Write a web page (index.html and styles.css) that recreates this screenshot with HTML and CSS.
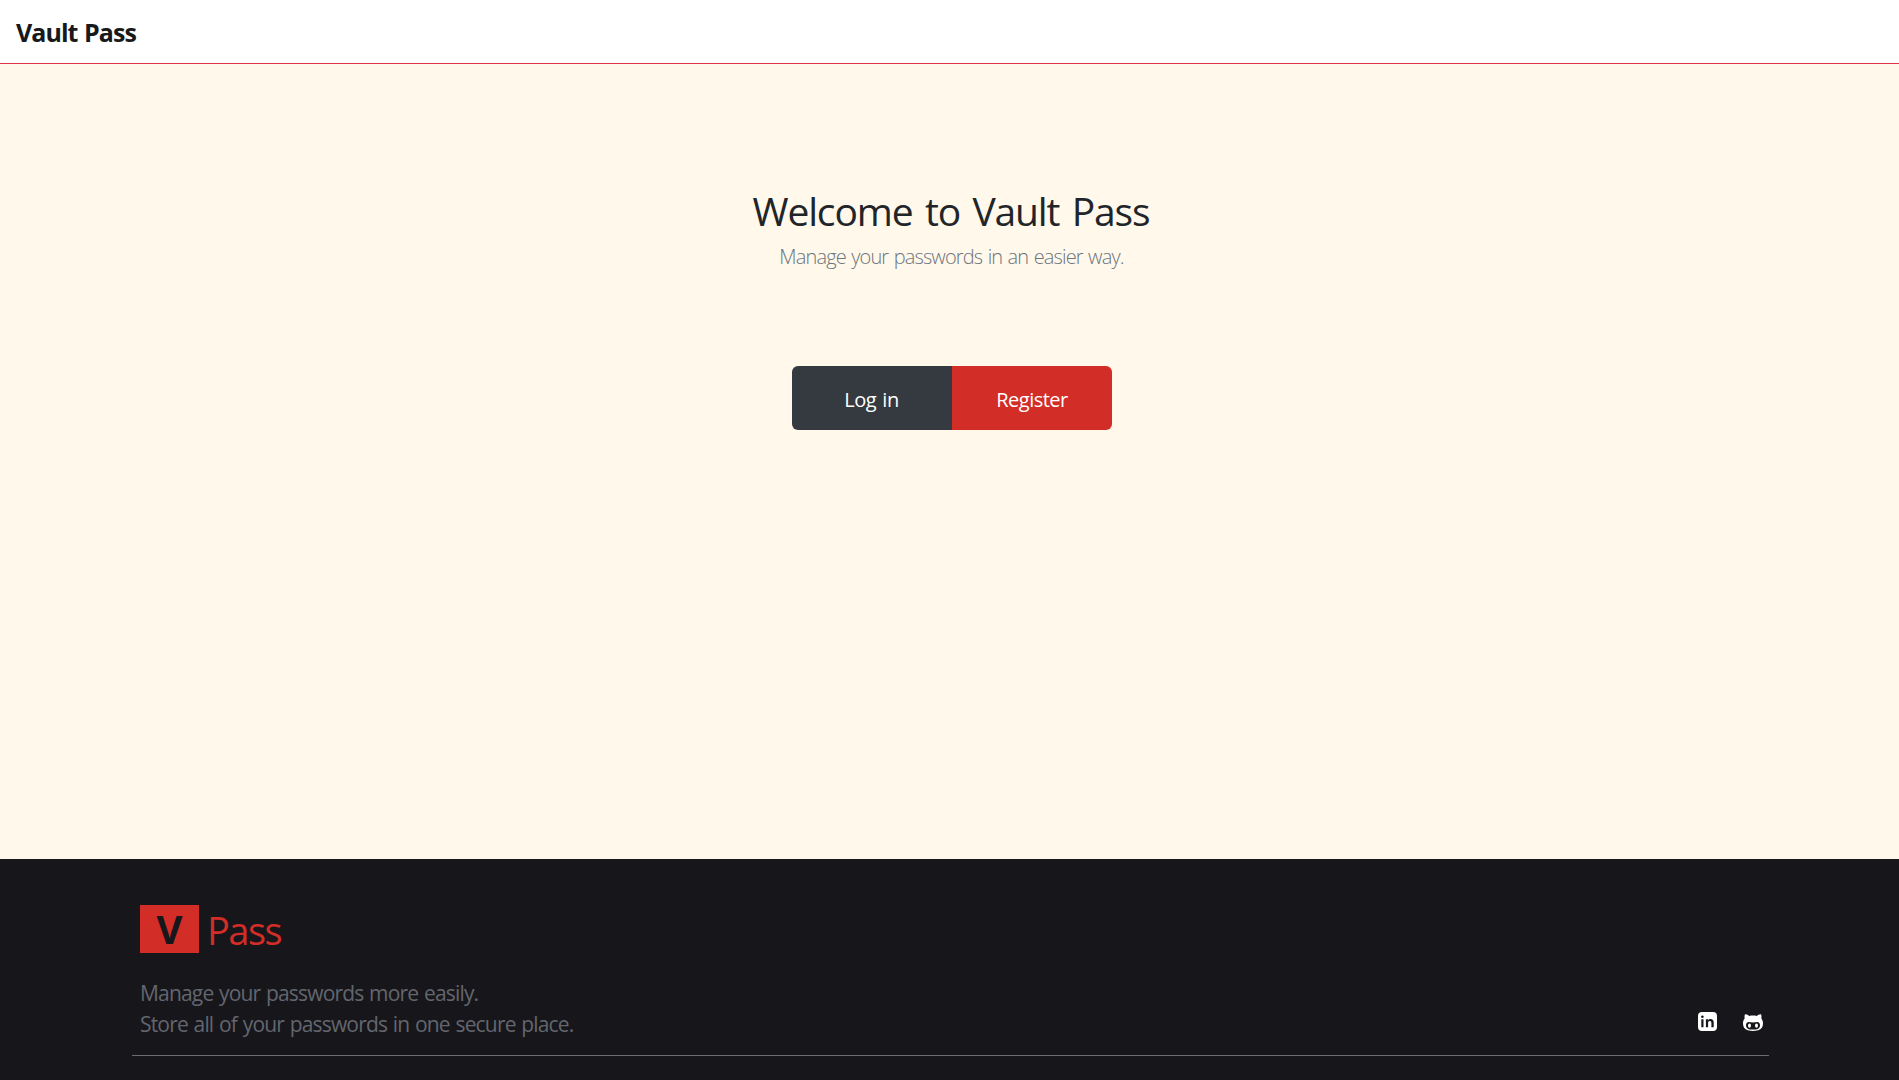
FILE: index.html
```
<!DOCTYPE html>
<html lang="en">
<head>
<meta charset="utf-8">
<title>Vault Pass</title>
<link rel="stylesheet" href="styles.css">
</head>
<body>
<header class="navbar"><a class="brand">Vault Pass</a></header>
<main class="hero">
  <h1 class="hero-title">Welcome to Vault Pass</h1>
  <p class="hero-lead">Manage your passwords in an easier way.</p>
  <div class="actions">
    <a class="btn btn-login">Log in</a>
    <a class="btn btn-register">Register</a>
  </div>
</main>
<footer class="footer">
  <div class="footer-inner">
    <div class="footer-about">
      <div class="logo"><span class="logo-mark">V</span><span class="logo-text">Pass</span></div>
      <p class="tagline">Manage your passwords more easily.<br>Store all of your passwords in one secure place.</p>
    </div>
    <nav class="social">
      <svg class="icon-linkedin" viewBox="0 0 19 19"><path fill="#fff" fill-rule="evenodd" d="M4 0h11a4 4 0 0 1 4 4v11a4 4 0 0 1-4 4H4a4 4 0 0 1-4-4V4a4 4 0 0 1 4-4zM3.300 7.300v8h2.200v-8zM4.400 3.500a1.300 1.300 0 1 0 0 2.600 1.300 1.300 0 0 0 0-2.600zM7.900 7.300v8h2.200v-4.200c0-1.200.6-2 1.700-2s1.600.8 1.600 2v4.200h2.300v-4.700c0-2.200-1.100-3.500-3-3.500-1.200 0-2.100.5-2.600 1.300V7.300z"/></svg>
      <svg class="icon-github" viewBox="0 0 20 17"><path fill="#fff" fill-rule="evenodd" d="M2 .3C3.500.1 5 .9 6.200 1.900c2.500-.5 5.100-.5 7.600 0C15 .9 16.500.1 18 .3c.6 1.500.6 3 .3 4.300 1.200 1.400 1.700 3 1.700 5C20 15 16 17 10 17S0 15 0 9.600c0-2 .5-3.600 1.700-5C1.400 3.300 1.400 1.800 2 .3zM5.800 8C3.900 8 3 9.300 3 11.200 3 14.500 5.700 15.600 10 15.600s7-1.100 7-4.400C17 9.300 16.100 8 14.200 8c-1.400 0-2.700.4-4.200.4S7.200 8 5.800 8z"/><ellipse fill="#fff" cx="6.500" cy="11.600" rx="1.500" ry="2.200"/><ellipse fill="#fff" cx="13.500" cy="11.600" rx="1.500" ry="2.200"/></svg>
    </nav>
  </div>
</footer>
</body>
</html>
```
FILE: styles.css
```
* { box-sizing: border-box; }
body {
  margin: 0;
  height: 1080px;
  display: flex;
  flex-direction: column;
  overflow: hidden;
  background: #fff8eb;
  color: #212529;
  font-family: "Open Sans", "Noto Sans", sans-serif;
}
.navbar {
  height: 64px;
  padding: 1px 16px 0;
  display: flex;
  align-items: center;
  background: #fff;
  border-bottom: 1px solid #dc3545;
}
.brand { font-size: 25px; font-weight: 700; line-height: 36px; letter-spacing: -0.95px; word-spacing: 1px; color: #18191b; }
.hero {
  flex: 1;
  padding: 123px 0 0 5px;
  display: flex;
  flex-direction: column;
  align-items: center;
}
.hero-title { margin: 0 2px 0 0; font-size: 39px; font-weight: 400; line-height: 48px; letter-spacing: -1.15px; word-spacing: 3.5px; }
.hero-lead { margin: 7px 1px 0 0; font-size: 20px; font-weight: 300; line-height: 30px; letter-spacing: -0.85px; word-spacing: 1px; color: #6c757d; }
.actions { display: flex; margin-top: 94px; border-radius: 6px; overflow: hidden; }
.btn {
  width: 160px;
  height: 64px;
  display: flex;
  align-items: center;
  justify-content: center;
  padding-top: 3px;
  font-size: 20px;
  letter-spacing: -0.5px;
  word-spacing: 1.5px;
  color: #fff;
}
.btn-login { padding-right: 1px; background: #343a40; }
.btn-register { background: #d22d27; }
.footer { height: 221px; padding: 46px 130px 0 132px; background: #17161b; }
.footer-inner {
  height: 151px;
  padding: 0 6px 0 8px;
  display: flex;
  justify-content: space-between;
  align-items: flex-end;
  border-bottom: 1px solid #6c6b70;
}
.footer-about { align-self: flex-start; }
.logo { display: flex; height: 48px; font-size: 40px; line-height: 48px; color: #d22d27; }
.logo-mark { width: 59px; text-align: center; font-weight: 700; background: #d22d27; color: #17161b; }
.logo-text { margin-left: 8px; padding-top: 1px; font-size: 38px; letter-spacing: -1.5px; }
.tagline { margin: 25px 0 0; font-size: 21px; line-height: 31px; letter-spacing: -0.82px; word-spacing: 1px; color: #63666e; }
.social { display: flex; align-items: flex-end; gap: 26px; padding-bottom: 24px; }
.icon-linkedin { width: 19px; height: 19px; }
.icon-github { width: 20px; height: 17px; }
```
